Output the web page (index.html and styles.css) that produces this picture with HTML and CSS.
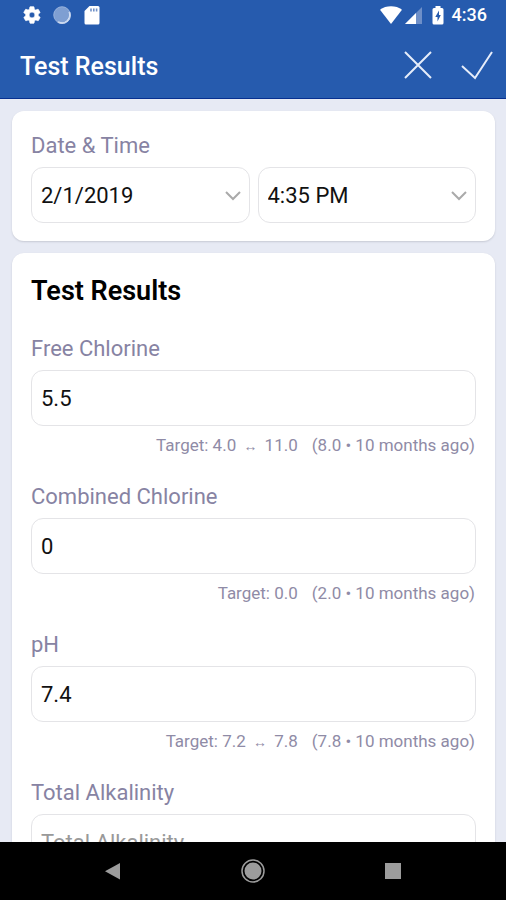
FILE: index.html
```html
<!DOCTYPE html>
<html lang="en">
<head>
<meta charset="utf-8">
<meta name="viewport" content="width=device-width, initial-scale=1">
<title>Test Results</title>
<link rel="stylesheet" href="styles.css">
</head>
<body>
<div class="screen">
  <header class="header">
    <div class="status">
      <div class="status-group status-left">
        <svg width="20" height="20" viewBox="0 0 24 24" fill="#fff" stroke="#fff" stroke-width=".8"><path fill-rule="evenodd" d="M19.4 13c0-.3.1-.6.1-1s0-.7-.1-1l2.1-1.600c.2-.2.300-.4.100-.6l-2-3.500c-.1-.2-.4-.3-.6-.2l-2.500 1c-.5-.4-1.100-.7-1.700-1L14.400 2.400c0-.2-.2-.4-.5-.4h-4c-.2 0-.5.2-.5.4L9 5.100c-.6.2-1.200.6-1.700 1l-2.500-1c-.2-.1-.5 0-.6.2l-2 3.500c-.1.2-.1.5.1.6L4.500 11c0 .3-.1.6-.1 1s0 .7.1 1l-2.100 1.600c-.2.200-.3.400-.1.600l2 3.500c.1.200.4.300.6.200l2.500-1c.5.400 1.100.700 1.700 1l.4 2.700c0 .2.2.4.5.4h4c.2 0 .5-.2.5-.4l.4-2.700c.6-.2 1.200-.6 1.700-1l2.500 1c.2.100.5 0 .6-.2l2-3.500c.1-.2.1-.5-.1-.6zM12 15.500a3.500 3.500 0 1 1 0-7 3.500 3.500 0 0 1 0 7z"/></svg>
        <svg width="20" height="20" viewBox="0 0 20 20"><circle cx="10" cy="10" r="8.500" fill="#7f9fd2"/><path d="M17.500 7.500A8 8 0 0 1 6.500 17.300" fill="none" stroke="#e3ebf8" stroke-width="1.700" stroke-linecap="round"/><circle cx="10" cy="10" r="8.300" fill="none" stroke="#a7bde2" stroke-width=".6"/></svg>
        <svg width="20" height="20" viewBox="0 0 20 20"><path fill="#fff" d="M7.500 1H16a1.500 1.500 0 0 1 1.500 1.500v15.500a1.500 1.500 0 0 1-1.500 1.500H4A1.500 1.500 0 0 1 2.500 18V6z"/><path stroke="#7191c8" stroke-width="1.600" d="M9 3.500v3M11.800 3.500v3M14.600 3.500v3"/></svg>
      </div>
      <div class="status-group status-right">
        <svg width="22" height="20" viewBox="0 0 22 20"><path fill="#fff" d="M0 4.800C6 .2 16 .2 22 4.800L11 19z"/></svg>
        <svg width="20" height="20" viewBox="0 0 20 20"><path fill="#6e8fc8" d="M18 2v17H1z"/><path fill="#fff" d="M12 8v11H1z"/></svg>
        <svg class="battery" width="12" height="20" viewBox="0 0 12 20"><path fill="#fff" d="M3.500 1h5v2H10a1.500 1.500 0 0 1 1.500 1.500V18a1.500 1.500 0 0 1-1.500 1.500H2A1.500 1.500 0 0 1 .5 18V4.500A1.500 1.500 0 0 1 2 3h1.500z"/><path fill="#265bae" d="M7 5.500 3.300 12h2.200v4.500L8.800 10H7z"/></svg>
        <span class="clock">4:36</span>
      </div>
    </div>
    <div class="toolbar">
      <h1 class="title">Test Results</h1>
      <div class="actions">
        <button class="action" type="button" aria-label="Cancel"><svg width="30" height="30" viewBox="0 0 30 30"><path d="M2 2l26 26M28 2 2 28"/></svg></button>
        <button class="action" type="button" aria-label="Save"><svg width="32" height="30" viewBox="0 0 32 30"><path d="M1 16l13 12L31 2"/></svg></button>
      </div>
    </div>
  </header>
  <main class="content">
    <section class="card">
      <label class="label" for="date">Date &amp; Time</label>
      <div class="pickers">
        <div class="picker">
          <select class="control" id="date"><option>2/1/2019</option></select>
          <svg class="chevron" width="16" height="10" viewBox="0 0 16 10"><path d="M1 1l7 7 7-7"/></svg>
        </div>
        <div class="picker">
          <select class="control" id="time" aria-label="Time"><option>4:35 PM</option></select>
          <svg class="chevron" width="16" height="10" viewBox="0 0 16 10"><path d="M1 1l7 7 7-7"/></svg>
        </div>
      </div>
    </section>
    <section class="card">
      <h2 class="heading">Test Results</h2>
      <div class="field">
        <label class="label" for="fc">Free Chlorine</label>
        <input class="control" id="fc" type="text" value="5.5">
        <p class="hint"><span>Target: 4.0 <span class="arrow">↔</span> 11.0</span><span>(8.0 • 10 months ago)</span></p>
      </div>
      <div class="field">
        <label class="label" for="cc">Combined Chlorine</label>
        <input class="control" id="cc" type="text" value="0">
        <p class="hint"><span>Target: 0.0</span><span>(2.0 • 10 months ago)</span></p>
      </div>
      <div class="field">
        <label class="label" for="ph">pH</label>
        <input class="control" id="ph" type="text" value="7.4">
        <p class="hint"><span>Target: 7.2 <span class="arrow">↔</span> 7.8</span><span>(7.8 • 10 months ago)</span></p>
      </div>
      <div class="field">
        <label class="label" for="ta">Total Alkalinity</label>
        <input class="control" id="ta" type="text" placeholder="Total Alkalinity">
      </div>
    </section>
  </main>
  <nav class="navbar">
    <button class="nav-button" type="button" aria-label="Back"><svg width="24" height="24" viewBox="0 0 24 24"><path fill="#9c9c9c" d="M19 4v16.500L4 12.300z"/></svg></button>
    <button class="nav-button" type="button" aria-label="Home"><svg width="24" height="24" viewBox="0 0 24 24"><circle cx="12" cy="12" r="8.500" fill="#9c9c9c"/><circle cx="12" cy="12" r="11" fill="none" stroke="#9c9c9c" stroke-width="1.500"/></svg></button>
    <button class="nav-button" type="button" aria-label="Recent apps"><svg width="24" height="24" viewBox="0 0 24 24"><path fill="#9c9c9c" d="M4 4h16v16H4z"/></svg></button>
  </nav>
</div>
</body>
</html>
```
FILE: styles.css
```css
* {
  box-sizing: border-box;
}

body {
  margin: 0;
  font-family: Roboto, "Liberation Sans", sans-serif;
  color: #111;
  background: #e7eaf4;
}

button {
  padding: 0;
  border: 0;
  background: none;
}

svg {
  display: block;
}

.screen {
  display: flex;
  flex-direction: column;
  height: 100vh;
}

.header {
  flex: none;
  color: #fff;
  background: #265bae;
  border-bottom: 1px solid #073090;
}

.status {
  display: flex;
  justify-content: space-between;
  align-items: center;
  height: 30px;
  padding: 0 19px 0 22px;
}

.status-group {
  display: flex;
  align-items: center;
}

.status-left {
  gap: 10px;
}

.status-right {
  gap: 2px;
}

.battery {
  margin: 0 6px;
}

.clock {
  font-size: 18px;
  font-weight: 500;
  line-height: 24px;
}

.toolbar {
  display: flex;
  justify-content: space-between;
  align-items: center;
  height: 68px;
  padding: 2px 13px 0 20px;
}

.title {
  margin: 0;
  padding-top: 3px;
  font-size: 25px;
  font-weight: 500;
  line-height: 32px;
}

.actions {
  display: flex;
  gap: 28px;
}

.action path {
  fill: none;
  stroke: #e6edfa;
  stroke-width: 2;
}

.content {
  flex: 1;
  min-height: 0;
  overflow: hidden;
  padding: 12px 11px 0 12px;
}

.card {
  margin-bottom: 12px;
  padding: 20px 19px 18px;
  border-radius: 12px;
  background: #fff;
  box-shadow: 0 1px 2px #c6c9d4;
}

.label {
  display: block;
  margin-bottom: 6px;
  font-size: 22px;
  line-height: 30px;
  color: #8783a3;
}

.heading {
  margin: 0 0 24px;
  font-size: 27px;
  font-weight: 600;
  line-height: 37px;
  color: #000;
}

.pickers {
  display: flex;
  gap: 8px;
}

.picker {
  position: relative;
  flex: 1;
}

.control {
  display: block;
  width: 100%;
  height: 56px;
  padding: 0 9px;
  border: 1px solid #e4e4e7;
  border-radius: 12px;
  font: inherit;
  font-size: 22px;
  color: #111;
  background: #fff;
  appearance: none;
}

.control::placeholder {
  color: #999;
}

.chevron {
  position: absolute;
  top: 24px;
  right: 9px;
  pointer-events: none;
}

.chevron path {
  fill: none;
  stroke: #aaa;
  stroke-width: 2;
}

.field {
  margin-bottom: 24px;
}

.hint {
  display: flex;
  justify-content: flex-end;
  gap: 14px;
  margin: 6px 1px 0 0;
  font-size: 17px;
  line-height: 26px;
  color: #8f8ba6;
}

.arrow {
  margin: 0 3px;
  font-size: 14px;
  line-height: 1;
}

.navbar {
  flex: none;
  display: flex;
  justify-content: center;
  align-items: center;
  gap: 116px;
  height: 58px;
  background: #000;
}
```
